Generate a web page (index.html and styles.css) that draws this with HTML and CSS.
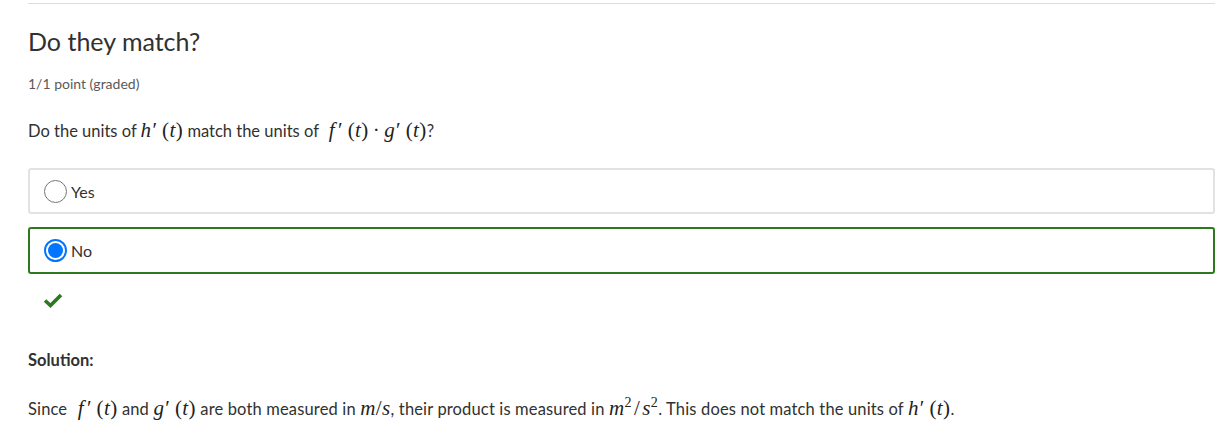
FILE: index.html
```html
<!DOCTYPE html>
<html lang="en">
<head>
<meta charset="utf-8">
<title>Do they match?</title>
<link rel="stylesheet" href="styles.css">
</head>
<body>
<div class="problem">
  <h3 class="title">Do they match?</h3>
  <div class="points">1/1 point (graded)</div>
  <p class="question">Do the units of <span class="math"><i>h</i><span class="pr">′</span>&#8201;(<i>t</i>)</span> match the units of <span class="math gap"><i>f</i><span class="pr pf">′</span>&#8201;(<i>t</i>)<span class="op">·</span><i>g</i><span class="pr">′</span>&#8201;(<i>t</i>)</span>?</p>
  <div class="choices">
    <label class="choice">
      <span class="radio"></span>
      <span class="choice-text">Yes</span>
    </label>
    <label class="choice correct">
      <span class="radio checked"></span>
      <span class="choice-text">No</span>
    </label>
  </div>
  <div class="status">
    <svg class="check" width="20" height="16" viewBox="0 0 20 16"><path d="M2 8.5 L7.5 13.5 L18 3" fill="none" stroke="#2b7a1e" stroke-width="3.6" stroke-linecap="butt" stroke-linejoin="miter"/></svg>
  </div>
  <div class="solution">
    <p class="solution-head">Solution:</p>
    <p class="solution-text">Since <span class="math gap"><i>f</i><span class="pr pf">′</span>&#8201;(<i>t</i>)</span> and <span class="math"><i>g</i><span class="pr">′</span>&#8201;(<i>t</i>)</span> are both measured in <span class="math"><i>m</i>/<i>s</i></span>, their product is measured in <span class="math"><i>m</i><sup>2</sup><span class="sl">/</span><i>s</i><sup>2</sup></span>. This does not match the units of <span class="math"><i>h</i><span class="pr">′</span>&#8201;(<i>t</i>)</span>.</p>
  </div>
</div>
</body>
</html>
```
FILE: styles.css
```css
html, body {
  margin: 0;
  padding: 0;
  background: #ffffff;
}
body {
  font-family: Lato, "Open Sans", "Liberation Sans", sans-serif;
  color: #313131;
}
.problem {
  margin: 3px 10px 0 28px;
  border-top: 1px solid #dddddd;
}
.title {
  margin: 22px 0 0 0;
  font-size: 25px;
  font-weight: 400;
  line-height: 31px;
  color: #313131;
}
.points {
  margin-top: 18px;
  font-size: 14px;
  line-height: 18px;
  color: #5a5a5a;
}
.question {
  margin: 25px 0 0 0;
  font-size: 16.5px;
  line-height: 24px;
  color: #313131;
}
.math {
  font-family: "Liberation Serif", "DejaVu Serif", serif;
  font-size: 21px;
  letter-spacing: 0.4px;
  color: #222;
}
.math i {
  font-style: italic;
}
.pr {
  margin-left: 1px;
}
.pf {
  margin-left: 3px;
}
.op {
  margin: 0 4px;
}
.sl {
  margin: 0 2px;
}
.math sup {
  font-size: 14px;
  vertical-align: 8px;
  line-height: 0;
}
.gap {
  margin-left: 6px;
}
.choices {
  margin-top: 25px;
  display: flex;
  flex-direction: column;
  gap: 13px;
}
.choice {
  display: flex;
  align-items: center;
  gap: 4px;
  height: 42px;
  padding-left: 14px;
  border: 2px solid #e2e2e2;
  border-radius: 3px;
  font-size: 16px;
  color: #313131;
}
.choice.correct {
  border-color: #2b7a1e;
  height: 43px;
}
.radio {
  box-sizing: border-box;
  width: 23px;
  height: 23px;
  border-radius: 50%;
  border: 1px solid #767676;
  background: #fff;
  flex: none;
}
.radio.checked {
  border: 2px solid #0075ff;
  position: relative;
}
.radio.checked::after {
  content: "";
  position: absolute;
  left: 2px;
  top: 2px;
  width: 15px;
  height: 15px;
  border-radius: 50%;
  background: #0075ff;
}
.status {
  margin-top: 18px;
  padding-left: 15px;
  height: 20px;
}
.check {
  display: block;
}
.solution-head {
  margin: 36px 0 0 0;
  font-size: 16.5px;
  font-weight: 700;
  line-height: 24px;
}
.solution-text {
  margin: 24px 0 0 0;
  font-size: 16.5px;
  line-height: 24px;
  letter-spacing: 0.15px;
}
```
